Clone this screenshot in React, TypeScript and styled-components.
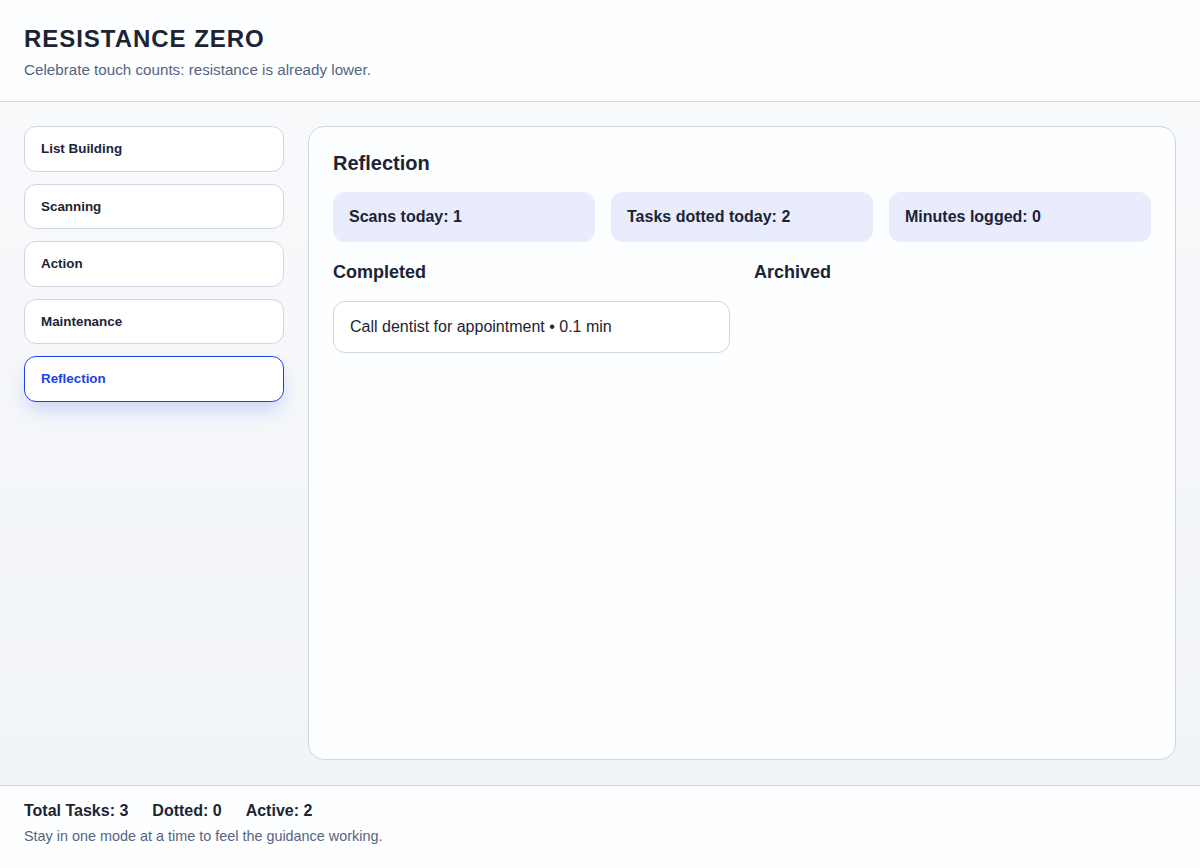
import React from "react";
import styled, { createGlobalStyle } from "styled-components";

const GlobalStyle = createGlobalStyle`
  * { box-sizing: border-box; }
  html, body { margin: 0; padding: 0; }
  body {
    font-family: "Liberation Sans", Arial, Helvetica, sans-serif;
    color: #1e293b;
    background: #f8fafc;
  }
`;

const Page = styled.div`
  min-height: 100vh;
  display: flex;
  flex-direction: column;
  background: linear-gradient(180deg, #f9fafc 0%, #f0f3f7 100%);
`;

const Header = styled.header`
  background: #fdfeff;
  border-bottom: 1px solid #cfd6e1;
  padding: 24px 24px 22px;
`;

const Title = styled.h1`
  margin: 0 0 8px;
  font-size: 24px;
  line-height: 29px;
  font-weight: 700;
  letter-spacing: 0.04em;
  color: #1c2434;
`;

const Subtitle = styled.p`
  margin: 0;
  font-size: 15.2px;
  line-height: 18px;
  color: #56647f;
`;

const Body = styled.main`
  flex: 1;
  display: grid;
  grid-template-columns: 260px 1fr;
  gap: 24px;
  padding: 24px 24px 25px;
`;

const Sidebar = styled.nav`
  display: flex;
  flex-direction: column;
  gap: 12px;
`;

const ModeButton = styled.button<{ $active?: boolean }>`
  display: block;
  width: 100%;
  text-align: left;
  font-family: inherit;
  font-size: 13.4px;
  line-height: 15.5px;
  font-weight: 700;
  padding: 14px 16px;
  border-radius: 12px;
  background: #ffffff;
  cursor: pointer;
  border: 1px solid ${(p) => (p.$active ? "#1d43e6" : "#cfd6e1")};
  color: ${(p) => (p.$active ? "#1d43e6" : "#1c2434")};
  box-shadow: ${(p) =>
    p.$active ? "0 10px 20px -4px rgba(45, 85, 235, 0.24)" : "none"};
`;

const Panel = styled.section`
  background: #fdfeff;
  border: 1px solid #cfd6e1;
  border-radius: 16px;
  padding: 24px;
`;

const PanelTitle = styled.h2`
  margin: 0 0 17px;
  font-size: 20px;
  line-height: 24px;
  font-weight: 700;
  color: #1c2434;
`;

const StatsRow = styled.div`
  display: grid;
  grid-template-columns: repeat(3, 1fr);
  gap: 16px;
  margin-bottom: 19px;
`;

const StatCard = styled.div`
  background: #e9ecfd;
  border-radius: 12px;
  padding: 16px;
  font-size: 16px;
  line-height: 18px;
  font-weight: 700;
  color: #1c2434;
`;

const Columns = styled.div`
  display: grid;
  grid-template-columns: 1fr 1fr;
  gap: 24px;
`;

const Column = styled.div`
  display: flex;
  flex-direction: column;
`;

const ColumnTitle = styled.h3`
  margin: 0 0 18px;
  font-size: 18px;
  line-height: 22px;
  font-weight: 700;
  color: #1c2434;
`;

const ItemCard = styled.div`
  background: #ffffff;
  border: 1px solid #cfd6e1;
  border-radius: 12px;
  padding: 16px;
  font-size: 16px;
  line-height: 18px;
  color: #1c2434;
`;

const Footer = styled.footer`
  background: #fdfeff;
  border-top: 1px solid #cfd6e1;
  padding: 16px 24px 23px;
`;

const FooterStats = styled.div`
  display: flex;
  gap: 24px;
  font-size: 16px;
  line-height: 18px;
  font-weight: 700;
  color: #1c2434;
  margin-bottom: 8px;
`;

const FooterNote = styled.p`
  margin: 0;
  font-size: 14.4px;
  line-height: 17px;
  color: #56647f;
`;

const modes = ["List Building", "Scanning", "Action", "Maintenance", "Reflection"];

export default function App() {
  const active = "Reflection";
  return (
    <>
      <GlobalStyle />
      <Page>
        <Header>
          <Title>RESISTANCE ZERO</Title>
          <Subtitle>Celebrate touch counts: resistance is already lower.</Subtitle>
        </Header>
        <Body>
          <Sidebar>
            {modes.map((m) => (
              <ModeButton key={m} $active={m === active}>
                {m}
              </ModeButton>
            ))}
          </Sidebar>
          <Panel>
            <PanelTitle>Reflection</PanelTitle>
            <StatsRow>
              <StatCard>Scans today: 1</StatCard>
              <StatCard>Tasks dotted today: 2</StatCard>
              <StatCard>Minutes logged: 0</StatCard>
            </StatsRow>
            <Columns>
              <Column>
                <ColumnTitle>Completed</ColumnTitle>
                <ItemCard>Call dentist for appointment • 0.1 min</ItemCard>
              </Column>
              <Column>
                <ColumnTitle>Archived</ColumnTitle>
              </Column>
            </Columns>
          </Panel>
        </Body>
        <Footer>
          <FooterStats>
            <span>Total Tasks: 3</span>
            <span>Dotted: 0</span>
            <span>Active: 2</span>
          </FooterStats>
          <FooterNote>Stay in one mode at a time to feel the guidance working.</FooterNote>
        </Footer>
      </Page>
    </>
  );
}
